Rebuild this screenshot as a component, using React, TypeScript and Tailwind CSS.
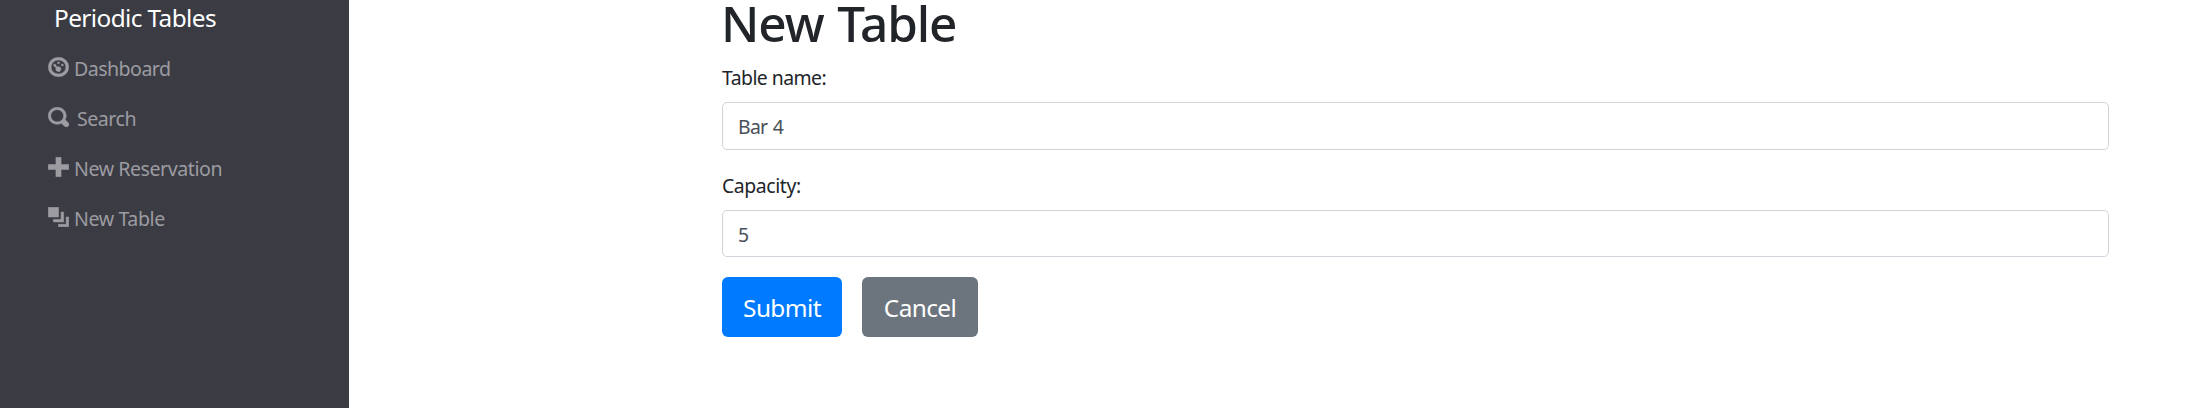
import type { ReactNode } from "react";

function Icon({ children }: { children: ReactNode }) {
  return (
    <svg
      viewBox="-0.1 -0.1 8.2 8.2"
      className="mt-[10px] h-5 w-[21px] shrink-0"
      preserveAspectRatio="none"
      fill="currentColor"
      stroke="currentColor"
      strokeWidth="0.22"
    >
      {children}
    </svg>
  );
}

function NavItem({ icon, label, className }: { icon: ReactNode; label: string; className: string }) {
  return (
    <a href="#" className="flex h-[50px] items-start whitespace-nowrap pl-[48px] text-[19.6px] leading-[44px] text-[#9c9ca1]">
      <Icon>{icon}</Icon>
      <span className={className}>{label}</span>
    </a>
  );
}

function Field({ label, value, labelClass, boxClass }: { label: string; value: string; labelClass: string; boxClass: string }) {
  return (
    <label className="block text-[#212529]">
      <span className={labelClass}>{label}</span>
      <input
        defaultValue={value}
        className={`block w-full rounded-[5px] border border-[#ced4da] bg-white px-[15px] text-[19.4px] tracking-[-0.7px] text-[#495057] outline-none [word-spacing:1px] ${boxClass}`}
      />
    </label>
  );
}

export default function App() {
  return (
    <div className="flex h-[408px] w-full overflow-hidden bg-white font-['Noto_Sans','Open_Sans',sans-serif]">
      <nav className="w-[349px] shrink-0 bg-[#3b3b44]">
        <div className="h-[47px] whitespace-nowrap pl-[54px] text-[24.4px] leading-[36px] tracking-[-0.6px] text-white">
          Periodic Tables
        </div>
        <NavItem
          label="Dashboard"
          className="ml-[5px] tracking-[-0.55px]"
          icon={
            <>
              <path d="M4 0a4 4 0 1 0 0 8 4 4 0 0 0 0-8zm0 1.1a2.9 2.9 0 1 1 0 5.8 2.9 2.9 0 0 1 0-5.8z" />
              <circle cx="4" cy="2.3" r=".4" />
              <circle cx="5.5" cy="3.2" r=".4" />
              <path d="M2.5 2.8a.45.45 0 0 0-.25.82l.85.75a1 1 0 1 0 1.1-.45c-.35-.08-.6 0-.85.1l-.6-1.1a.5.5 0 0 0-.25-.12z" />
            </>
          }
        />
        <NavItem
          label="Search"
          className="ml-[8px] tracking-[-0.5px]"
          icon={
            <path d="M3.5 0c-1.93 0-3.5 1.57-3.5 3.5s1.57 3.5 3.5 3.5c.59 0 1.17-.14 1.66-.41a1 1 0 0 0 .13.13l1 1a1.02 1.02 0 1 0 1.44-1.44l-1-1a1 1 0 0 0-.16-.13c.27-.49.44-1.06.44-1.66 0-1.93-1.55-3.5-3.5-3.5zm0 1c1.39 0 2.5 1.11 2.5 2.5 0 .66-.24 1.27-.66 1.72-.01.01-.02.02-.03.03a1 1 0 0 0-.13.13c-.44.4-1.04.63-1.69.63-1.39 0-2.5-1.11-2.5-2.5s1.11-2.5 2.5-2.5z" />
          }
        />
        <NavItem
          label="New Reservation"
          className="ml-[5px] tracking-[-0.45px]"
          icon={<path d="M3 0v3h-3v2h3v3h2v-3h3v-2h-3v-3h-2z" />}
        />
        <NavItem
          label="New Table"
          className="ml-[5px] tracking-[-0.4px]"
          icon={<path d="M0 0v4h4v-4h-4zm5 2v3h-3v1h4v-4h-1zm2 2v3h-3v1h4v-4h-1z" />}
        />
      </nav>
      <main className="flex-1 pl-[373px] pr-[94px]">
        <h1 className="-ml-px h-[60px] whitespace-nowrap text-[49.5px] font-medium leading-[47px] tracking-[-1.1px] text-[#212529] [word-spacing:2px]">
          New Table
        </h1>
        <form onSubmit={(e) => e.preventDefault()}>
          <Field
            label="Table name:"
            value="Bar 4"
            labelClass="block h-[42px] text-[19.4px] leading-[36px] tracking-[-0.55px]"
            boxClass="h-12"
          />
          <Field
            label="Capacity:"
            value="5"
            labelClass="block h-[60px] pt-[18px] text-[19.4px] leading-[36px] tracking-[-0.4px]"
            boxClass="h-[47px] pt-[2px]"
          />
          <div className="mt-5 flex gap-5 text-[24.4px] text-white">
            <button type="submit" className="h-[60px] w-[120px] rounded-[6px] bg-[#007bff] pt-[2px] tracking-[-0.6px]">
              Submit
            </button>
            <button type="button" className="h-[60px] w-[116px] rounded-[6px] bg-[#6c757d] pt-[2px] tracking-[-0.6px]">
              Cancel
            </button>
          </div>
        </form>
      </main>
    </div>
  );
}
